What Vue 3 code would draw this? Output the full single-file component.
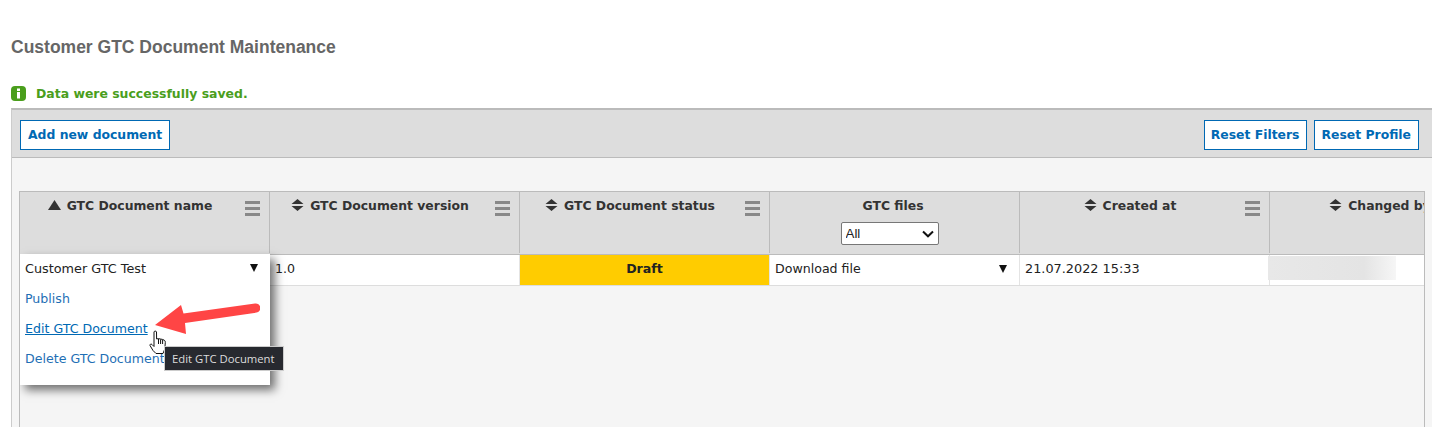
<script setup>
const columns = [
  { name: 'GTC Document name', sort: 'asc', menu: true },
  { name: 'GTC Document version', sort: 'both', menu: true },
  { name: 'GTC Document status', sort: 'both', menu: true },
  { name: 'GTC files', filter: true },
  { name: 'Created at', sort: 'both', menu: true },
  { name: 'Changed by', sort: 'both', menu: true },
]
</script>

<template>
  <div class="page">
    <h1 class="title">Customer GTC Document Maintenance</h1>
    <div class="message">
      <svg class="info" width="15" height="15" viewBox="0 0 15 15">
        <rect x="0" y="0" width="15" height="15" rx="4" fill="#4a9e1c" />
        <rect x="6" y="2.5" width="3" height="2.5" fill="#fff" />
        <rect x="6" y="6" width="3" height="6.5" fill="#fff" />
      </svg>
      <span>Data were successfully saved.</span>
    </div>

    <section class="panel">
      <div class="toolbar">
        <button class="btn">Add new document</button>
        <div class="toolbar-right">
          <button class="btn tight">Reset Filters</button>
          <button class="btn">Reset Profile</button>
        </div>
      </div>

      <div class="content">
        <div class="table">
          <div class="head">
            <div v-for="c in columns" :key="c.name" class="th">
              <div class="th-main">
                <div class="th-label">
                  <svg v-if="c.sort === 'asc'" class="sort" width="13" height="10" viewBox="0 0 13 10">
                    <path d="M6.5 0 L13 10 L0 10 Z" fill="#333" />
                  </svg>
                  <svg v-else-if="c.sort === 'both'" class="sort" width="13" height="12" viewBox="0 0 13 12">
                    <path d="M6.5 0 L12.5 5 L0.5 5 Z M0.5 7 L12.5 7 L6.5 12 Z" fill="#333" />
                  </svg>
                  <span>{{ c.name }}</span>
                </div>
                <select v-if="c.filter" class="filter"><option>All</option></select>
              </div>
              <div v-if="c.menu" class="burger"><i></i><i></i><i></i></div>
            </div>
          </div>

          <div class="row">
            <div class="td"></div>
            <div class="td">1.0</div>
            <div class="td draft">Draft</div>
            <div class="td between"><span>Download file</span><span class="caret"></span></div>
            <div class="td date">21.07.2022 15:33</div>
            <div class="td blurred-cell"><div class="blurred"></div></div>
          </div>

          <div class="menu">
            <div class="menu-head"><span>Customer GTC Test</span><span class="caret"></span></div>
            <a class="menu-link">Publish</a>
            <a class="menu-link active">Edit GTC Document</a>
            <a class="menu-link">Delete GTC Document</a>
          </div>
        </div>
      </div>
    </section>

    <svg class="arrow" width="110" height="34" viewBox="150 303 110 34">
      <path d="M155 325 L181 305 L183.5 313.5 L255 303.5 A4.6 4.6 0 0 1 256.5 312.6 L185 323 L186 334 Z" fill="#ff4545" />
    </svg>

    <svg class="cursor" width="20" height="26" viewBox="0 0 20 26">
      <path d="M5 2 C5 .8 7.5 .8 7.5 2 L7.6 9 L9.4 8.6 L11.4 9 L13.4 9.4 L15.3 10.2 C16 10.6 16.4 11.4 16.3 12.5 L15.8 19 L14 23.5 L7 23.5 L4 20.5 L1 15.5 C.6 14.4 2 13.5 3 14.5 L5 16.5 Z" fill="#fff" stroke="#111" stroke-width="1" stroke-linejoin="round" />
      <path d="M9.5 9 V14 M11.6 9.4 V14 M13.6 9.8 V14" stroke="#111" stroke-width="1" fill="none" />
    </svg>

    <div class="tooltip">Edit GTC Document</div>
  </div>
</template>

<style>
html, body { margin: 0; overflow: hidden; background: #fff; }
</style>

<style scoped>
.page {
  position: relative;
  width: 1432px;
  height: 427px;
  overflow: hidden;
  background: #fff;
  font-family: "DejaVu Sans", sans-serif;
  font-size: 12px;
  color: #222;
}
.title {
  margin: 0;
  padding: 38px 0 0 11px;
  height: 18px;
  font: bold 17.5px/18px "Liberation Sans", sans-serif;
  color: #666;
}
.message {
  display: flex;
  align-items: center;
  gap: 10px;
  margin: 30px 0 0 11px;
  height: 15px;
  font-weight: bold;
  font-size: 12.45px;
  color: #4a9e1c;
}
.info { flex: none; }
.panel {
  margin: 7px 0 0 11px;
  width: 1440px;
  background: #f5f5f5;
  border-top: 2px solid #bbb;
  border-left: 1px solid #ccc;
}
.toolbar {
  display: flex;
  justify-content: space-between;
  align-items: flex-start;
  box-sizing: border-box;
  width: 1440px;
  height: 48px;
  padding: 10px 33px 0 8px;
  background: #ddd;
  border-bottom: 1px solid #bbb;
}
.toolbar-right { display: flex; gap: 7px; }
.btn {
  box-sizing: border-box;
  height: 30px;
  padding: 0 7px 2px;
  background: #fff;
  border: 1px solid #0069b4;
  color: #0069b4;
  font: bold 12.4px "DejaVu Sans", sans-serif;
  white-space: nowrap;
}
.btn.tight { padding: 0 6px 2px; }
.content {
  height: 270px;
  padding: 33px 0 0 7px;
  box-sizing: border-box;
}
.table {
  position: relative;
  box-sizing: border-box;
  width: 1406px;
  height: 237px;
  border: 1px solid #bbb;
  border-bottom: 0;
  overflow: hidden;
}
.head, .row {
  display: grid;
  grid-template-columns: repeat(6, 250px);
}
.head {
  height: 62px;
  background: #ddd;
  border-bottom: 1px solid #bbb;
}
.th {
  display: flex;
  box-sizing: border-box;
  padding: 5px 9px 0 6px;
  height: 61px;
  border-right: 1px solid #bbb;
  font-weight: bold;
  font-size: 12.4px;
  color: #333;
}
.th-main {
  flex: 1;
  display: flex;
  flex-direction: column;
  align-items: center;
  gap: 9px;
}
.th-label {
  display: flex;
  align-items: center;
  gap: 6px;
  height: 16px;
  white-space: nowrap;
}
.sort { flex: none; }
.burger {
  flex: none;
  display: flex;
  flex-direction: column;
  gap: 3px;
  width: 15px;
  margin: 4px 0 0 11px;
}
.burger i {
  display: block;
  height: 3px;
  background: #888;
}
.filter {
  appearance: none;
  box-sizing: border-box;
  width: 98px;
  height: 23px;
  margin-right: 7px;
  padding-left: 4px;
  background: #fff url("data:image/svg+xml,%3Csvg xmlns='http://www.w3.org/2000/svg' width='12' height='8'%3E%3Cpath d='M1 1.5 L6 6.3 L11 1.5' fill='none' stroke='%23111' stroke-width='2'/%3E%3C/svg%3E") no-repeat right 4px center;
  border: 1px solid #777;
  border-radius: 2px;
  font: 13.33px "Liberation Sans", sans-serif;
  color: #222;
}
.row {
  height: 31px;
  background: #fff;
  border-bottom: 1px solid #ddd;
  box-sizing: border-box;
}
.td {
  box-sizing: border-box;
  display: flex;
  align-items: center;
  height: 30px;
  padding: 0 5px 3px;
  border-right: 1px solid #e4e4e4;
  font-size: 12.6px;
  white-space: nowrap;
}
.date { font-size: 12.85px; }
.draft {
  justify-content: center;
  background: #ffcc00;
  font-weight: bold;
}
.between { justify-content: space-between; padding-right: 12px; }
.caret {
  width: 0;
  height: 0;
  border-left: 4px solid transparent;
  border-right: 4px solid transparent;
  border-top: 8px solid #111;
}
.blurred-cell { padding: 0; align-items: flex-start; border-right: 0; }
.blurred {
  width: 128px;
  height: 24px;
  margin: 1px 0 0 -2px;
  background: linear-gradient(90deg, #e8e8e8, #e4e4e4 75%, #f6f6f6);
}
.menu {
  position: absolute;
  left: 0;
  top: 62px;
  width: 250px;
  height: 131px;
  background: #fff;
  box-shadow: 5px 5px 9px rgba(0, 0, 0, 0.55);
  font-size: 12.6px;
}
.menu-head {
  display: flex;
  justify-content: space-between;
  align-items: center;
  height: 28px;
  margin-bottom: 3px;
  padding: 0 12px 0 5px;
  font-size: 12.8px;
}
.menu-link {
  display: block;
  height: 30px;
  line-height: 28px;
  padding-left: 5px;
  color: #1f6fb5;
  white-space: nowrap;
}
.menu-link.active { color: #0069b4; text-decoration: underline; }
.tooltip {
  position: absolute;
  left: 164px;
  top: 346px;
  box-sizing: border-box;
  width: 120px;
  height: 25px;
  padding-left: 7px;
  background: #27292f;
  border: 1px solid #ccc;
  color: #ddd;
  font: 11.3px/23px "Open Sans", sans-serif;
  white-space: nowrap;
}
.arrow { position: absolute; left: 150px; top: 303px; }
.cursor { position: absolute; left: 149px; top: 330px; }
</style>
